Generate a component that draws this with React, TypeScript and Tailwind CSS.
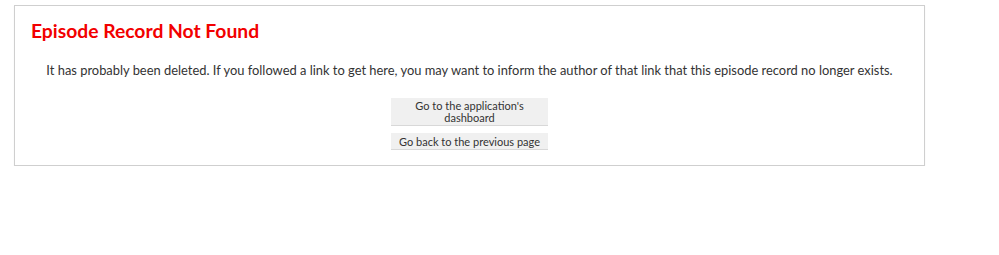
const NotFound = () => {
  return (
    <div className="pt-[5px] pl-[14px]">
      <div
        className="w-[911px] h-[161px] border border-[#cfcfcf] shadow-[0_1px_1px_rgba(0,0,0,0.08)] bg-white px-4 pt-[13px]"
        style={{ fontFamily: "Lato, 'Noto Sans', sans-serif" }}
      >
        <h1 className="text-[19.3px] font-bold leading-6 text-[#f20000]">
          Episode Record Not Found
        </h1>

        <p className="mt-[17px] whitespace-nowrap text-center text-[12.9px] leading-5 text-[#333]">
          It has probably been deleted. If you followed a link to get here, you
          may want to inform the author of that link that this episode record no
          longer exists.
        </p>

        <div className="mt-[18px] flex flex-col items-center gap-[7px]">
          <button className="h-[28px] w-[157px] bg-[#f0f0f0] border-b border-[#d8d8d8] px-3 text-[11px] leading-[12px] text-[#333]">
            Go to the application's
            <br />
            dashboard
          </button>
          <button className="h-[17px] w-[157px] whitespace-nowrap bg-[#f0f0f0] border-b border-[#d8d8d8] px-1 text-[11px] leading-[13px] text-[#333]">
            Go back to the previous page
          </button>
        </div>
      </div>
    </div>
  );
};

export default function App() {
  return <NotFound />;
}
